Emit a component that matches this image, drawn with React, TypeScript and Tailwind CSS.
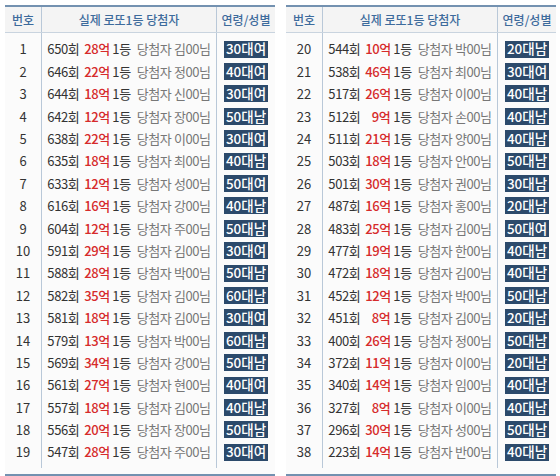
const left: [number, number, number, string, string][] = [
  [1, 650, 28, '김', '30대여'],
  [2, 646, 22, '정', '40대여'],
  [3, 644, 18, '신', '30대여'],
  [4, 642, 12, '장', '50대남'],
  [5, 638, 22, '이', '30대여'],
  [6, 635, 18, '최', '40대남'],
  [7, 633, 12, '성', '50대여'],
  [8, 616, 16, '강', '40대남'],
  [9, 604, 12, '주', '50대남'],
  [10, 591, 29, '김', '30대여'],
  [11, 588, 28, '박', '50대남'],
  [12, 582, 35, '김', '60대남'],
  [13, 581, 18, '김', '30대여'],
  [14, 579, 13, '박', '60대남'],
  [15, 569, 34, '강', '50대남'],
  [16, 561, 27, '현', '40대여'],
  [17, 557, 18, '김', '40대남'],
  [18, 556, 20, '장', '50대남'],
  [19, 547, 28, '주', '30대여'],
];

const right: [number, number, number, string, string][] = [
  [20, 544, 10, '박', '20대남'],
  [21, 538, 46, '최', '30대여'],
  [22, 517, 26, '이', '40대남'],
  [23, 512, 9, '손', '40대남'],
  [24, 511, 21, '양', '40대남'],
  [25, 503, 18, '안', '50대남'],
  [26, 501, 30, '권', '30대남'],
  [27, 487, 16, '홍', '20대남'],
  [28, 483, 25, '김', '50대여'],
  [29, 477, 19, '한', '40대남'],
  [30, 472, 18, '김', '40대남'],
  [31, 452, 12, '박', '50대남'],
  [32, 451, 8, '김', '20대남'],
  [33, 400, 26, '정', '50대남'],
  [34, 372, 11, '이', '20대남'],
  [35, 340, 14, '임', '40대남'],
  [36, 327, 8, '이', '40대남'],
  [37, 296, 30, '성', '50대남'],
  [38, 223, 14, '반', '40대남'],
];

function WinnerTable({ rows }: { rows: [number, number, number, string, string][] }) {
  return (
    <div className="w-[270px] border-y-2 border-[#7391b0] bg-[#fbfbfb]">
      <div className="flex h-[26px] border-b border-[#c9d4df] bg-[#f4f4f4] text-[12px] font-medium text-[#3d6b9c]">
        <div className="flex w-[36px] items-center justify-center">번호</div>
        <div className="flex w-[176px] items-center justify-center border-x border-[#b9c8d8]">실제 로또1등 당첨자</div>
        <div className="flex flex-1 items-center justify-center">연령/성별</div>
      </div>
      <div className="flex">
        <div className="w-[36px] pt-[5px] pb-[5px]">
          {rows.map(([no]) => (
            <div key={no} className="flex h-[22.4px] items-center justify-center text-[13px] text-[#333]">
              {no}
            </div>
          ))}
        </div>
        <div className="w-[176px] border-x border-[#b9c8d8] pt-[5px] pb-[5px]">
          {rows.map(([no, round, amount, name]) => (
            <div
              key={no}
              className="flex h-[22.4px] items-center justify-center whitespace-nowrap text-[13px] tracking-[-0.4px] text-[#333]"
            >
              <span>{round}회</span>
              <span className="ml-[5px] w-[25px] shrink-0 text-right font-medium text-[#d62b2b]">{amount}억</span>
              <span className="ml-[3px]">1등</span>
              <span className="ml-[6px] text-[#777]">당첨자 {name}00님</span>
            </div>
          ))}
        </div>
        <div className="flex-1 pt-[5px] pb-[5px]">
          {rows.map(([no, , , , age]) => (
            <div key={no} className="flex h-[22.4px] items-center justify-center">
              <span className="flex h-[17px] w-[44px] items-center justify-center bg-[#2c4a6b] text-[13.5px] font-medium leading-none text-white">
                {age}
              </span>
            </div>
          ))}
        </div>
      </div>
    </div>
  );
}

export default function App() {
  return (
    <div
      className="flex h-[476px] w-[560px] gap-[11px] bg-white pl-[5px] pt-[5px]"
      style={{ fontFamily: '"Noto Sans CJK KR", "Noto Sans", sans-serif' }}
    >
      <WinnerTable rows={left} />
      <WinnerTable rows={right} />
    </div>
  );
}
